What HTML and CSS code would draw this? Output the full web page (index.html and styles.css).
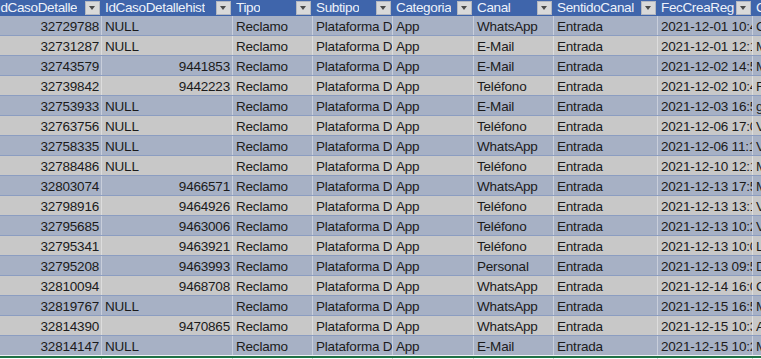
FILE: index.html
```html
<!DOCTYPE html>
<html lang="es">
<head>
<meta charset="utf-8">
<title>Hoja</title>
<link rel="stylesheet" href="styles.css">
</head>
<body>
<div class="sheet">
  <div class="row head">
    <div class="hc"><span>IdCasoDetalle</span><i class="dd"></i></div>
    <div class="hc"><span>IdCasoDetallehist</span><i class="dd"></i></div>
    <div class="hc"><span>Tipo</span><i class="dd"></i></div>
    <div class="hc"><span>Subtipo</span><i class="dd"></i></div>
    <div class="hc"><span>Categoria</span><i class="dd"></i></div>
    <div class="hc"><span>Canal</span><i class="dd"></i></div>
    <div class="hc"><span>SentidoCanal</span><i class="dd"></i></div>
    <div class="hc"><span>FecCreaReg</span><i class="dd"></i></div>
    <div class="hc"><span>Comentario</span><i class="dd"></i></div>
  </div>
  <div class="row odd"><div class="c n">32729788</div><div class="c">NULL</div><div class="c">Reclamo</div><div class="c">Plataforma Digital</div><div class="c">App</div><div class="c">WhatsApp</div><div class="c">Entrada</div><div class="c">2021-12-01 10:45</div><div class="c">Cliente</div></div>
  <div class="row even"><div class="c n">32731287</div><div class="c">NULL</div><div class="c">Reclamo</div><div class="c">Plataforma Digital</div><div class="c">App</div><div class="c">E-Mail</div><div class="c">Entrada</div><div class="c">2021-12-01 12:15</div><div class="c">Mensaje</div></div>
  <div class="row odd"><div class="c n">32743579</div><div class="c n">9441853</div><div class="c">Reclamo</div><div class="c">Plataforma Digital</div><div class="c">App</div><div class="c">E-Mail</div><div class="c">Entrada</div><div class="c">2021-12-02 14:55</div><div class="c">Mensaje</div></div>
  <div class="row even"><div class="c n">32739842</div><div class="c n">9442223</div><div class="c">Reclamo</div><div class="c">Plataforma Digital</div><div class="c">App</div><div class="c">Teléfono</div><div class="c">Entrada</div><div class="c">2021-12-02 10:45</div><div class="c">Falla</div></div>
  <div class="row odd"><div class="c n">32753933</div><div class="c">NULL</div><div class="c">Reclamo</div><div class="c">Plataforma Digital</div><div class="c">App</div><div class="c">E-Mail</div><div class="c">Entrada</div><div class="c">2021-12-03 16:55</div><div class="c">gestión</div></div>
  <div class="row even"><div class="c n">32763756</div><div class="c">NULL</div><div class="c">Reclamo</div><div class="c">Plataforma Digital</div><div class="c">App</div><div class="c">Teléfono</div><div class="c">Entrada</div><div class="c">2021-12-06 17:05</div><div class="c">Valida</div></div>
  <div class="row odd"><div class="c n">32758335</div><div class="c">NULL</div><div class="c">Reclamo</div><div class="c">Plataforma Digital</div><div class="c">App</div><div class="c">WhatsApp</div><div class="c">Entrada</div><div class="c">2021-12-06 11:15</div><div class="c">Valida</div></div>
  <div class="row even"><div class="c n">32788486</div><div class="c">NULL</div><div class="c">Reclamo</div><div class="c">Plataforma Digital</div><div class="c">App</div><div class="c">Teléfono</div><div class="c">Entrada</div><div class="c">2021-12-10 12:15</div><div class="c">Mensaje</div></div>
  <div class="row odd"><div class="c n">32803074</div><div class="c n">9466571</div><div class="c">Reclamo</div><div class="c">Plataforma Digital</div><div class="c">App</div><div class="c">WhatsApp</div><div class="c">Entrada</div><div class="c">2021-12-13 17:55</div><div class="c">Mensaje</div></div>
  <div class="row even"><div class="c n">32798916</div><div class="c n">9464926</div><div class="c">Reclamo</div><div class="c">Plataforma Digital</div><div class="c">App</div><div class="c">Teléfono</div><div class="c">Entrada</div><div class="c">2021-12-13 13:15</div><div class="c">Valida</div></div>
  <div class="row odd"><div class="c n">32795685</div><div class="c n">9463006</div><div class="c">Reclamo</div><div class="c">Plataforma Digital</div><div class="c">App</div><div class="c">Teléfono</div><div class="c">Entrada</div><div class="c">2021-12-13 10:25</div><div class="c">Valida</div></div>
  <div class="row even"><div class="c n">32795341</div><div class="c n">9463921</div><div class="c">Reclamo</div><div class="c">Plataforma Digital</div><div class="c">App</div><div class="c">Teléfono</div><div class="c">Entrada</div><div class="c">2021-12-13 10:05</div><div class="c">Llamada</div></div>
  <div class="row odd"><div class="c n">32795208</div><div class="c n">9463993</div><div class="c">Reclamo</div><div class="c">Plataforma Digital</div><div class="c">App</div><div class="c">Personal</div><div class="c">Entrada</div><div class="c">2021-12-13 09:55</div><div class="c">Datos</div></div>
  <div class="row even"><div class="c n">32810094</div><div class="c n">9468708</div><div class="c">Reclamo</div><div class="c">Plataforma Digital</div><div class="c">App</div><div class="c">WhatsApp</div><div class="c">Entrada</div><div class="c">2021-12-14 16:05</div><div class="c">Cliente</div></div>
  <div class="row odd"><div class="c n">32819767</div><div class="c">NULL</div><div class="c">Reclamo</div><div class="c">Plataforma Digital</div><div class="c">App</div><div class="c">WhatsApp</div><div class="c">Entrada</div><div class="c">2021-12-15 16:55</div><div class="c">Mensaje</div></div>
  <div class="row even"><div class="c n">32814390</div><div class="c n">9470865</div><div class="c">Reclamo</div><div class="c">Plataforma Digital</div><div class="c">App</div><div class="c">WhatsApp</div><div class="c">Entrada</div><div class="c">2021-12-15 10:35</div><div class="c">Atención</div></div>
  <div class="row odd last"><div class="c n">32814147</div><div class="c">NULL</div><div class="c">Reclamo</div><div class="c">Plataforma Digital</div><div class="c">App</div><div class="c">E-Mail</div><div class="c">Entrada</div><div class="c">2021-12-15 10:25</div><div class="c">Mensaje</div></div>
  <div class="selection"></div>
  <div class="row blank"><div class="c"></div><div class="c"></div><div class="c"></div><div class="c"></div><div class="c"></div><div class="c"></div><div class="c"></div><div class="c"></div><div class="c"></div></div>
</div>
</body>
</html>
```

FILE: styles.css
```css
html, body {
  margin: 0;
  padding: 0;
  background: #ffffff;
  overflow: hidden;
}

.sheet {
  margin-left: -6px;
  width: 830px;
  font-family: "Liberation Sans", Arial, sans-serif;
  font-size: 13.5px;
  letter-spacing: -0.2px;
  color: #1b1b1b;
}

.row {
  display: grid;
  grid-template-columns: 108px 131px 80px 80px 81px 80px 104px 95px 77px;
  height: 20px;
  box-sizing: border-box;
  border-bottom: 1px solid #8b9dc1;
}

.head {
  height: 16px;
  background: #3f65ab;
  border-bottom: none;
  color: #eef2fa;
  letter-spacing: -0.35px;
}

.hc {
  display: flex;
  justify-content: space-between;
  align-items: flex-start;
  overflow: hidden;
  white-space: nowrap;
  line-height: 15px;
  padding-left: 3px;
  box-sizing: border-box;
}

.hc span {
  overflow: hidden;
}

.dd {
  flex: none;
  position: relative;
  width: 13px;
  height: 12px;
  margin: 1px 2px 0 1px;
  background: #d9d9d9;
  border: 1px solid #b4b8c0;
}

.dd::after {
  content: "";
  position: absolute;
  left: 3px;
  top: 4px;
  border-left: 3.5px solid transparent;
  border-right: 3.5px solid transparent;
  border-top: 4px solid #4a4a4a;
}

.odd { background: #a7b1c5; }
.even { background: #c8c8c8; }
.last { border-bottom-color: #eef0f4; }

.c {
  overflow: hidden;
  white-space: nowrap;
  line-height: 15px;
  padding: 3px 2px 0 3px;
  box-sizing: border-box;
  border-right: 1px solid rgba(255, 255, 255, 0.38);
}

.c.n {
  text-align: right;
}

.selection {
  height: 2px;
  background: #1e7145;
}

.blank {
  height: 10px;
  border-bottom: none;
  background: #ffffff;
}

.blank .c {
  border-right: 1px solid #d4d4d4;
}
```
